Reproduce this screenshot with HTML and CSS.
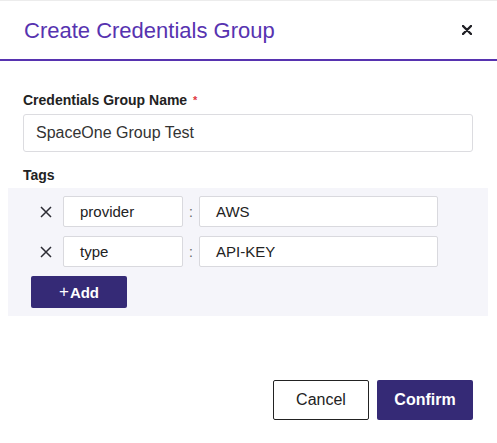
FILE: index.html
```html
<!DOCTYPE html>
<html>
<head>
<meta charset="utf-8">
<link rel="stylesheet" href="styles.css">
</head>
<body>
<div class="modal">
  <div class="header">
    <h1 class="title">Create Credentials Group</h1>
    <button class="close" aria-label="Close">
      <svg width="10" height="10" viewBox="0 0 10 10"><path d="M1 1L9 9M9 1L1 9" stroke="#1f1f24" stroke-width="2.4" stroke-linecap="round"/></svg>
    </button>
  </div>
  <div class="content">
    <label class="label">Credentials Group Name <span class="req">*</span></label>
    <div class="input">SpaceOne Group Test</div>
    <div class="label tags-label">Tags</div>
    <div class="panel">
      <div class="tag-row">
        <span class="remove"><svg width="12" height="12" viewBox="0 0 12 12"><path d="M1 1L11 11M11 1L1 11" stroke="#2b2b33" stroke-width="1.5"/></svg></span>
        <div class="field key">provider</div>
        <span class="colon">:</span>
        <div class="field value">AWS</div>
      </div>
      <div class="tag-row">
        <span class="remove"><svg width="12" height="12" viewBox="0 0 12 12"><path d="M1 1L11 11M11 1L1 11" stroke="#2b2b33" stroke-width="1.5"/></svg></span>
        <div class="field key">type</div>
        <span class="colon">:</span>
        <div class="field value">API-KEY</div>
      </div>
      <button class="add"><span class="plus">+</span>Add</button>
    </div>
    <div class="footer">
      <button class="btn cancel">Cancel</button>
      <button class="btn confirm">Confirm</button>
    </div>
  </div>
</div>
</body>
</html>
```
FILE: styles.css
```css
* { box-sizing: border-box; }
html, body { margin: 0; padding: 0; background: #fff; }
body { font-family: "Liberation Sans", Arial, sans-serif; color: #222; }
.modal { border-top: 1px solid #ececec; width: 497px; height: 443px; }
.header {
  height: 60px;
  display: flex;
  align-items: center;
  justify-content: space-between;
  padding: 0 25px 0 24px;
  border-bottom: 2px solid #5733b0;
}
.title { margin: 0; font-size: 22px; font-weight: normal; color: #5733b0; padding-top: 1px; }
.close { border: 0; background: none; padding: 0; width: 10px; height: 10px; display: flex; }
.content { padding: 31px 24px 0 23px; }
.label { display: block; font-size: 14px; font-weight: bold; line-height: 17px; color: #222; }
.req { color: #e0383e; font-size: 11px; vertical-align: top; margin-left: 2px; }
.input {
  margin-top: 5px;
  height: 38px;
  border: 1px solid #dcdce0;
  border-radius: 3px;
  padding-left: 12px;
  display: flex;
  align-items: center;
  font-size: 16px;
  color: #333;
}
.tags-label { margin-top: 15px; }
.panel {
  margin: 4px -15px 0 -15px;
  background: #f5f5fa;
  padding: 8px 0 8px 23px;
  display: flex;
  flex-direction: column;
  gap: 9px;
}
.tag-row { display: flex; align-items: center; height: 31px; }
.remove { width: 32px; display: flex; justify-content: center; padding-right: 2px; }
.field {
  height: 31px;
  background: #fff;
  border: 1px solid #d9d9de;
  border-radius: 2px;
  display: flex;
  align-items: center;
  padding-left: 16px;
  font-size: 15px;
  color: #222;
}
.key { width: 120px; }
.value { width: 239px; }
.colon { width: 16px; text-align: center; font-size: 14px; color: #666; }
.add {
  width: 96px;
  height: 32px;
  border: 0;
  border-radius: 2px;
  background: #352a76;
  color: #fff;
  font-family: "Liberation Sans", Arial, sans-serif;
  font-size: 15px;
  font-weight: bold;
  display: flex;
  align-items: center;
  justify-content: center;
  padding: 0;
}
.plus { font-weight: normal; font-size: 17px; margin-right: 1px; }
.footer { display: flex; justify-content: flex-end; gap: 8px; margin-top: 64px; }
.btn {
  width: 96px;
  height: 40px;
  border-radius: 2px;
  font-family: "Liberation Sans", Arial, sans-serif;
  font-size: 16px;
  padding: 0;
}
.cancel { background: #fff; border: 1px solid #222; color: #222; }
.confirm { background: #352a76; border: 0; color: #fff; font-weight: bold; }
```
